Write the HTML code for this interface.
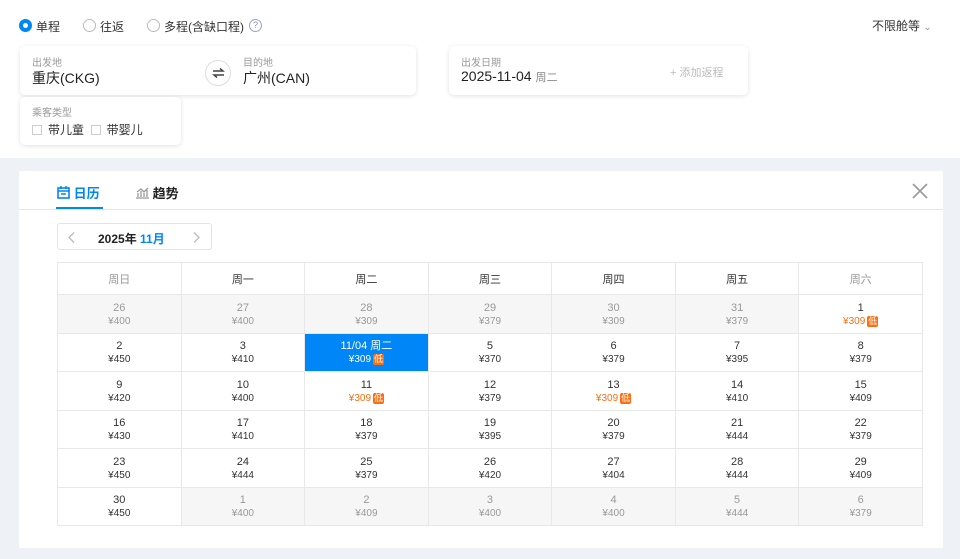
<!DOCTYPE html>
<html><head><meta charset="utf-8"><style>
*{box-sizing:border-box;margin:0;padding:0}
body{width:960px;height:559px;overflow:hidden;background:#eef1f5;font-family:"Liberation Sans","Noto Sans CJK SC",sans-serif;color:#333;position:relative}
.top{position:absolute;left:0;top:0;width:960px;height:158px;background:#fff}
.abs{position:absolute}
.radio{position:absolute;top:19px;width:13px;height:13px;border:1px solid #bbb;border-radius:50%}
.radio.on{border:4px solid #0086f6}
.lbl{position:absolute;top:18px;font-size:12px;color:#333}
.card{position:absolute;background:#fff;border-radius:5px;box-shadow:0 1px 5px rgba(0,0,0,.12)}
.small{font-size:10px;color:#999}
.big{font-size:14px;color:#222}
.cb{display:inline-block;width:10px;height:10px;border:1px solid #ccc;vertical-align:-1px;margin-right:6px}
.panel{position:absolute;left:19px;top:171px;width:924px;height:377px;background:#fff}
table{position:absolute;left:57px;top:262px;border-collapse:collapse;table-layout:fixed;width:866px}
td,th{border:1px solid #e8e8e8;text-align:center}
th{height:32px;font-weight:normal;font-size:11px;color:#333}
td{height:38.5px;font-size:11px;color:#333;line-height:14px;padding-top:2px}
td .p{font-size:10px;color:#333}
td.g{background:#f6f6f6;color:#999}td.g .p{color:#999}
td.sel{background:#0086f6;color:#fff}td.sel .p{color:#fff}
.o{color:#f96f12!important}
.low{display:inline-block;background:#f96f12;color:#fff;font-size:9px;line-height:11px;padding:0 1px;border-radius:2px;margin-left:2px}
</style></head><body>
<div class="top">
<div class="radio on" style="left:19px"></div><div class="lbl" style="left:36px">单程</div>
<div class="radio" style="left:83px"></div><div class="lbl" style="left:100px">往返</div>
<div class="radio" style="left:147px"></div><div class="lbl" style="left:164px">多程(含缺口程)</div>
<div class="abs" style="left:249px;top:19px;width:13px;height:13px;border:1px solid #9aa6c5;border-radius:50%;font-size:9px;color:#8090b8;text-align:center;line-height:11px">?</div>
<div class="abs" style="left:872px;top:17px;font-size:12px;color:#333">不限舱等 <span style="color:#999;font-size:10px">&#8964;</span></div>
<div class="card" style="left:20px;top:46px;width:396px;height:49px">
<div class="abs small" style="left:12px;top:8px">出发地</div>
<div class="abs big" style="left:12px;top:22px">重庆(CKG)</div>
<div class="abs" style="left:185px;top:14px;width:26px;height:26px;border:1px solid #ddd;border-radius:50%"><svg class="abs" style="left:6px;top:7px" width="13" height="10" viewBox="0 0 13 10"><path d="M1 3h10L8 0.5M12 7H2l3 2.5" stroke="#444" stroke-width="1.5" fill="none"/></svg></div>
<div class="abs small" style="left:223px;top:8px">目的地</div>
<div class="abs big" style="left:223px;top:22px">广州(CAN)</div>
</div>
<div class="card" style="left:449px;top:46px;width:299px;height:49px">
<div class="abs small" style="left:12px;top:8px">出发日期</div>
<div class="abs big" style="left:12px;top:22px">2025-11-04 <span style="font-size:11px;color:#888">周二</span></div>
<div class="abs" style="left:221px;top:18px;font-size:11px;color:#bbb">+ 添加返程</div>
</div>
<div class="card" style="left:20px;top:97px;width:161px;height:48px">
<div class="abs small" style="left:12px;top:7px">乘客类型</div>
<div class="abs" style="left:12px;top:24px;font-size:12px"><span class="cb"></span>带儿童&nbsp;&nbsp;<span class="cb"></span>带婴儿</div>
</div>
</div>
<div class="panel">
<div class="abs" style="left:0;top:38px;width:924px;height:1px;background:#e6e6e6"></div>
<div class="abs" style="left:38px;top:12px;font-size:13px;font-weight:bold;color:#0086f6">
<svg width="13" height="13" viewBox="0 0 13 13" style="vertical-align:-1px"><rect x="1" y="2" width="11" height="10" fill="none" stroke="#0086f6" stroke-width="1.6"/><path d="M1 5h11M4 0v3M9 0v3M4 8h5" stroke="#0086f6" stroke-width="1.5"/></svg> 日历</div>
<div class="abs" style="left:37px;top:36px;width:47px;height:2px;background:#0086f6"></div>
<div class="abs" style="left:117px;top:12px;font-size:13px;font-weight:bold;color:#222">
<svg width="13" height="13" viewBox="0 0 13 13" style="vertical-align:-1px"><path d="M0 12h13M2 11V7M5 11V5M8 11V7M11 11V4M1 6l4-3 3 3 4-4" stroke="#999" stroke-width="1.3" fill="none"/></svg> 趋势</div>
<svg class="abs" style="left:893px;top:12px" width="16" height="16" viewBox="0 0 16 16"><path d="M1 1l14 14M15 1L1 15" stroke="#999" stroke-width="1.6"/></svg>
<div class="abs" style="left:38px;top:52px;width:155px;height:27px;border:1px solid #e3e3e3;border-radius:3px;font-size:12px">
<svg class="abs" style="left:10px;top:8px" width="7" height="11" viewBox="0 0 7 11"><path d="M6 0.5L1 5.5l5 5" stroke="#bbb" stroke-width="1.3" fill="none"/></svg>
<span class="abs" style="left:40px;top:6px;font-weight:bold;color:#222">2025年 <span style="color:#0086f6">11月</span></span>
<svg class="abs" style="left:135px;top:8px" width="7" height="11" viewBox="0 0 7 11"><path d="M1 0.5l5 5-5 5" stroke="#bbb" stroke-width="1.3" fill="none"/></svg>
</div>
</div>
<table>
<tr><th style="color:#999">周日</th><th>周一</th><th>周二</th><th>周三</th><th>周四</th><th>周五</th><th style="color:#999">周六</th></tr>
<tr><td class="g">26<div class="p">¥400</div></td><td class="g">27<div class="p">¥400</div></td><td class="g">28<div class="p">¥309</div></td><td class="g">29<div class="p">¥379</div></td><td class="g">30<div class="p">¥309</div></td><td class="g">31<div class="p">¥379</div></td><td>1<div class="p o">¥309<span class="low">低</span></div></td></tr>
<tr><td>2<div class="p">¥450</div></td><td>3<div class="p">¥410</div></td><td class="sel">11/04 周二<div class="p">¥309<span class="low">低</span></div></td><td>5<div class="p">¥370</div></td><td>6<div class="p">¥379</div></td><td>7<div class="p">¥395</div></td><td>8<div class="p">¥379</div></td></tr>
<tr><td>9<div class="p">¥420</div></td><td>10<div class="p">¥400</div></td><td>11<div class="p o">¥309<span class="low">低</span></div></td><td>12<div class="p">¥379</div></td><td>13<div class="p o">¥309<span class="low">低</span></div></td><td>14<div class="p">¥410</div></td><td>15<div class="p">¥409</div></td></tr>
<tr><td>16<div class="p">¥430</div></td><td>17<div class="p">¥410</div></td><td>18<div class="p">¥379</div></td><td>19<div class="p">¥395</div></td><td>20<div class="p">¥379</div></td><td>21<div class="p">¥444</div></td><td>22<div class="p">¥379</div></td></tr>
<tr><td>23<div class="p">¥450</div></td><td>24<div class="p">¥444</div></td><td>25<div class="p">¥379</div></td><td>26<div class="p">¥420</div></td><td>27<div class="p">¥404</div></td><td>28<div class="p">¥444</div></td><td>29<div class="p">¥409</div></td></tr>
<tr><td>30<div class="p">¥450</div></td><td class="g">1<div class="p">¥400</div></td><td class="g">2<div class="p">¥409</div></td><td class="g">3<div class="p">¥400</div></td><td class="g">4<div class="p">¥400</div></td><td class="g">5<div class="p">¥444</div></td><td class="g">6<div class="p">¥379</div></td></tr>
</table>
</body></html>
